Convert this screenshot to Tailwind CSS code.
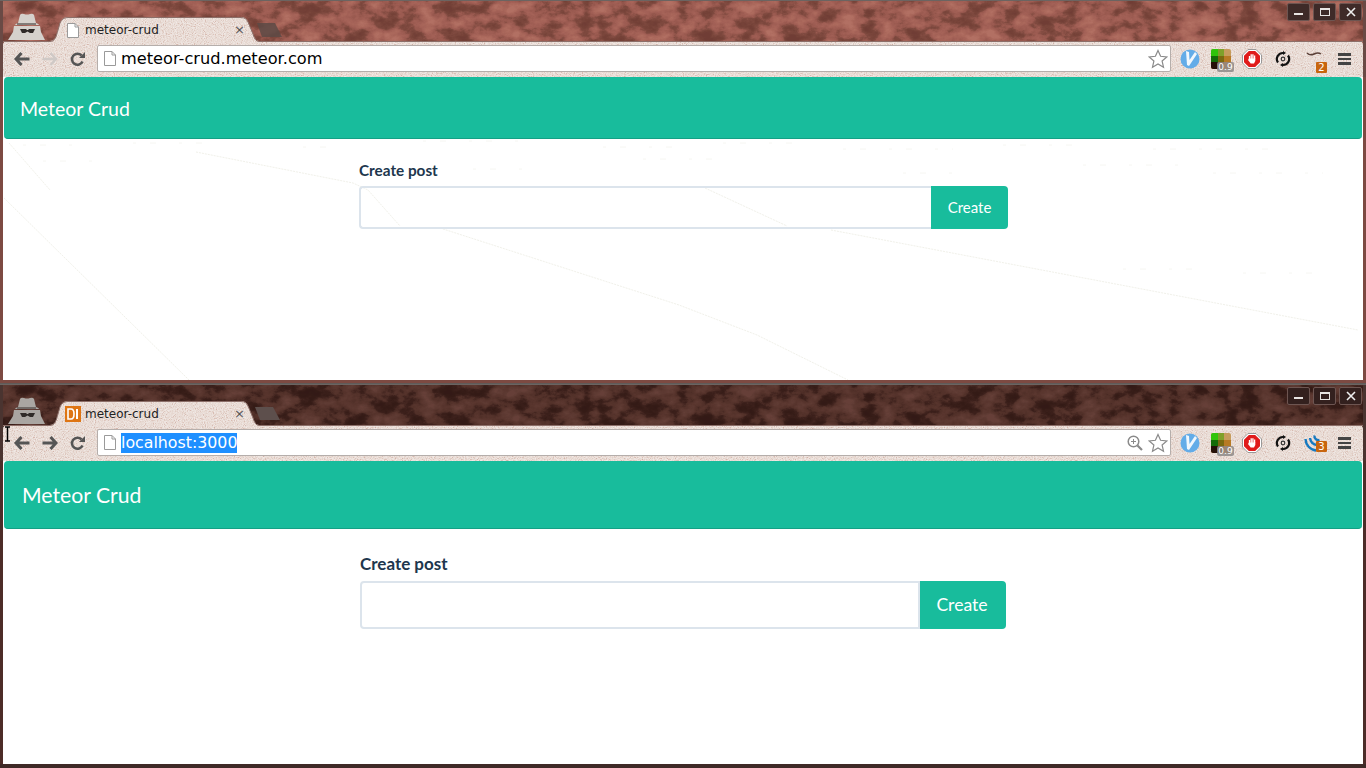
<!DOCTYPE html>
<html lang="en">
<head>
    <meta charset="UTF-8">
    <title>meteor-crud</title>
    <script src="https://cdn.jsdelivr.net/npm/@tailwindcss/browser@4"></script>
</head>
<body class="bg-[#3f2a27] overflow-hidden font-['Lato',sans-serif]">
    <div class="flex flex-col h-[768px] w-[1366px]">

        <!-- top window -->
        <section class="h-[380px] flex flex-col bg-[#7d4a42] border-t border-[#6b6461] px-[3px] relative">
            <div class="relative h-[76px] -mx-[3px]">
                <svg class="absolute inset-0" width="1366" height="76" viewBox="0 0 1366 76">
                    <defs>
                        <filter id="rustA" x="0" y="0" width="100%" height="100%" color-interpolation-filters="sRGB">
                            <feTurbulence type="fractalNoise" baseFrequency="0.05 0.07" numOctaves="7" seed="11"/>
                            <feColorMatrix values="1 0 0 0 0 1 0 0 0 0 1 0 0 0 0 0 0 0 0 1"/>
                            <feComponentTransfer>
                                <feFuncR type="table" tableValues="0.44 0.44 0.44 0.46 0.50 0.60 0.64 0.67 0.70 0.70 0.70"/>
                                <feFuncG type="table" tableValues="0.24 0.24 0.24 0.26 0.29 0.35 0.38 0.41 0.44 0.44 0.44"/>
                                <feFuncB type="table" tableValues="0.21 0.21 0.21 0.22 0.25 0.31 0.34 0.36 0.39 0.39 0.39"/>
                            </feComponentTransfer>
                        </filter>
                        <filter id="grainA" x="0" y="0" width="100%" height="100%" color-interpolation-filters="sRGB">
                            <feTurbulence type="fractalNoise" baseFrequency="0.9" numOctaves="2" seed="4"/>
                            <feColorMatrix values="1 0 0 0 0 1 0 0 0 0 1 0 0 0 0 0 0 0 0 1"/>
                            <feComponentTransfer>
                                <feFuncR type="table" tableValues="0.80 0.84 0.90 0.93 0.95 0.96"/>
                                <feFuncG type="table" tableValues="0.66 0.72 0.84 0.89 0.92 0.94"/>
                                <feFuncB type="table" tableValues="0.62 0.68 0.81 0.87 0.91 0.93"/>
                            </feComponentTransfer>
                        </filter>
                        <clipPath id="chromeA">
                            <path d="M3 76V44Q3 40 8 40H50C55 40 56 36 58 29L60 22Q62 16 68 16H241Q246 16 248 21L253 33Q255 40 259 40H1358Q1363 40 1363 44V76Z"/>
                        </clipPath>
                    </defs>
                    <rect width="1366" height="76" filter="url(#rustA)"/>
                    <rect width="3" height="76" fill="#6a4a45"/>
                    <rect x="1363" width="3" height="76" fill="#6a4a45"/>
                    <path d="M257 22H275L282 36H262Z" fill="#5d4a45" opacity="0.85"/>
                    <g clip-path="url(#chromeA)"><rect width="1366" height="76" filter="url(#grainA)"/></g>
                    <path d="M3 40.5H50C55 40.5 56 36 58 29L60 22Q62 16.500 68 16.500H241Q246 16.500 248 21L253 33Q255 40.500 259 40.500H1363" fill="none" stroke="#8c6f69" stroke-width="1"/>
                    <!-- incognito -->
                    <path d="M18 22L20 14Q21 12 24 13Q27 14 30 13Q33 12 34 14L36 22Q39 23 39 24H15Q15 23 18 22Z" fill="#d5d1cc"/>
                    <path d="M14 25H40L41 31L45 39H20H8L13 31Z" fill="#d5d1cc"/>
                    <path d="M17 23H36" stroke="#4a4340" stroke-width="1.200"/>
                    <path d="M20 28H26L27 29H28L29 28H35L33 32H30L27.500 30.500L25 32H22Z" fill="#2f2a28"/>
                </svg>
                <div class="relative flex flex-col h-full">
                    <div class="h-[40px] flex items-start">
                        <div class="ml-[67px] mt-[21px] w-[178px] flex items-center text-[12px] text-[#222] font-['DejaVu_Sans',sans-serif]">
                            <svg width="12" height="15" viewBox="0 0 12 15" class="mr-[6px] shrink-0"><path d="M.5.500H8L11.500 4V14.500H.5Z" fill="#fff" stroke="#9a9a9a"/><path d="M8 .5V4H11.500" fill="none" stroke="#9a9a9a"/></svg>
                            <span class="flex-1 leading-[16px]">meteor-crud</span>
                            <span class="text-[13px] leading-[16px] text-[#555]">×</span>
                        </div>
                        <div class="ml-auto mr-[4px] mt-[2px] flex gap-[3px]">
                            <div class="w-[23px] h-[18px] border border-[#6d5551] bg-[#3e2a28] rounded-[2px] flex items-center justify-center"><div class="w-[9px] h-[2px] mt-[3px] bg-[#e8e4e2]"></div></div>
                            <div class="w-[23px] h-[18px] border border-[#6d5551] bg-[#3e2a28] rounded-[2px] flex items-center justify-center"><div class="w-[10px] h-[8px] border border-t-2 border-[#e8e4e2]"></div></div>
                            <div class="w-[23px] h-[18px] border border-[#6d5551] bg-[#3e2a28] rounded-[2px] flex items-center justify-center"><svg width="10" height="10" viewBox="0 0 10 10"><path d="M1 1L9 9M9 1L1 9" stroke="#eee" stroke-width="1.600"/></svg></div>
                        </div>
                    </div>
                    <div class="h-[36px] flex items-center pl-[8px] pr-[6px]">
                        <div class="w-[28px] flex justify-center"><svg width="16" height="14" viewBox="0 0 16 14"><path d="M7.500 1L2 7L7.500 13M2 7H15.500" fill="none" stroke="#555" stroke-width="3"/></svg></div>
                        <div class="w-[28px] flex justify-center"><svg width="16" height="14" viewBox="0 0 16 14"><path d="M8.500 1L14 7L8.500 13M14 7H.5" fill="none" stroke="#cfc9c6" stroke-width="2.400"/></svg></div>
                        <div class="w-[28px] -ml-[1px] flex justify-center"><svg width="15" height="15" viewBox="0 0 15 15"><path d="M12.500 9.500A5.500 5.500 0 1 1 11.500 3.500" fill="none" stroke="#555" stroke-width="2.600"/><path d="M9 6H15V0Z" fill="#555"/></svg></div>
                        <div class="ml-[6px] mb-[1px] flex-1 h-[27px] bg-white border border-[#b5aeab] rounded-[2px] flex items-center pl-[6px] pr-[2px]">
                            <svg width="12" height="15" viewBox="0 0 12 15" class="mr-[5px] shrink-0"><path d="M.5.500H8L11.500 4V14.500H.5Z" fill="#fff" stroke="#9a9a9a"/><path d="M8 .5V4H11.500" fill="none" stroke="#9a9a9a"/></svg>
                            <span class="flex-1 pt-[2px] text-[16.200px] text-black font-['DejaVu_Sans',sans-serif]">meteor-crud.meteor.com</span>
                            <svg width="20" height="20" viewBox="0 0 20 20"><path d="M10 1.500L12.600 7.300L18.800 7.900L14.100 12L15.500 18.200L10 15L4.500 18.200L5.900 12L1.200 7.900L7.400 7.300Z" fill="#fff" stroke="#8a8a8a" stroke-width="1.200"/></svg>
                        </div>
                        <div class="ml-[3px] w-[31px] flex justify-center"><svg width="20" height="20" viewBox="0 0 20 20"><circle cx="10" cy="10" r="9.500" fill="#63ace8"/><path d="M6 2L9 3L9.500 11L15 3L17 5L9 17L7 16Z" fill="#fff" opacity="0.9"/></svg></div>
                        <div class="w-[31px] flex justify-center relative">
                            <svg width="20" height="20" viewBox="0 0 20 20"><rect width="20" height="20" rx="2" fill="#c69c5d"/><path d="M0 2Q0 0 2 0H7V7H0Z" fill="#2fc40a"/><rect x="7" width="6" height="7" fill="#7fa02a"/><rect y="7" width="7" height="6" fill="#136b08"/><rect x="7" y="7" width="6" height="6" fill="#7a6a10"/><rect x="13" y="7" width="7" height="6" fill="#b77a24"/><path d="M0 13H7V20H2Q0 20 0 18Z" fill="#241008"/><rect x="7" y="13" width="6" height="7" fill="#7a3f0a"/><path d="M13 13H20V18Q20 20 18 20H13Z" fill="#dc7410"/></svg>
                            <span class="absolute left-[12px] top-[13px] w-[17px] h-[10px] bg-[#8d8a88]/85 rounded-[2px] text-[9px] leading-[10px] text-white text-center font-['DejaVu_Sans',sans-serif]">0.9</span>
                        </div>
                        <div class="w-[31px] flex justify-center"><svg width="20" height="20" viewBox="0 0 20 20"><path d="M6 .5H14L19.500 6V14L14 19.500H6L.5 14V6Z" fill="#fff" stroke="#999"/><path d="M6.800 2L13.200 2L18 6.800V13.200L13.200 18H6.800L2 13.200V6.800Z" fill="#e01b1b"/><path d="M7.500 10V7M9.200 10V5.200M10.900 10V5.200M12.600 10V6.500" stroke="#fff" stroke-width="1.300"/><path d="M6.900 9.500H13.300V12L12 14.500H8.700L6 11Z" fill="#fff"/></svg></div>
                        <div class="w-[31px] flex justify-center"><svg width="16" height="16" viewBox="0 0 16 16"><path d="M3 11.500A6 6 0 0 1 8 2M13 4.500A6 6 0 0 1 8 14" fill="none" stroke="#111" stroke-width="2.200"/><circle cx="8" cy="8" r="1.800" fill="none" stroke="#333" stroke-width="1.200"/><path d="M8 0L11 2L8 4ZM8 16L5 14L8 12Z" fill="#111"/></svg></div>
                        <div class="w-[31px] flex justify-center relative">
                            <svg width="16" height="6" viewBox="0 0 16 6" class="-mt-[8px]"><path d="M1 2Q4 5 8 3Q12 1 15 3" fill="none" stroke="#5b4038" stroke-width="1.500"/></svg>
                            <span class="absolute left-[18px] top-[3px] w-[11px] h-[11px] bg-[#c8650e] rounded-[1px] text-[10px] leading-[11px] text-white text-center font-['DejaVu_Sans',sans-serif]">2</span>
                        </div>
                        <div class="w-[31px] flex justify-center"><div class="w-[13px] flex flex-col gap-[2px]"><div class="h-[2.500px] bg-[#444]"></div><div class="h-[2.500px] bg-[#444]"></div><div class="h-[2.500px] bg-[#444]"></div></div></div>
                    </div>
                </div>
            </div>
            <div class="flex-1 bg-white relative">
                <!-- faint leftovers of the wallpaper on the page -->
                <svg class="absolute inset-0" width="1360" height="303" viewBox="0 0 1360 303">
                    <path d="M6 66L47 113M1 121L186 303M193 75L350 106L365 113L397 149M437 151L676 228L754 258L845 303M702 111L784 149M828 153L1355 253" fill="none" stroke="#f1f1ea" stroke-width="1" stroke-dasharray="2 1"/>
                    <path d="M20 68H70M130 66H220M300 70H345M420 64H520M600 70H680M720 66H800M840 72H950M1000 68H1090M1150 72H1280M40 84H90M470 92H520M640 82H720M900 96H960M1080 88H1180M1210 96H1320M1120 192H1200M1240 196H1330" fill="none" stroke="#f6f6f2" stroke-width="1" stroke-dasharray="3 14 6 23"/>
                </svg>
                <nav class="relative mx-px h-[62px] bg-[#18bc9c] border-b border-[#14a085] rounded-[4px] flex items-center pl-[16px]">
                    <span class="text-[19.500px] pt-[2px] text-white">Meteor Crud</span>
                </nav>
                <div class="relative ml-[356px] w-[649px] pt-[22px]">
                    <label class="block text-[15.300px] leading-[18px] font-bold text-[#20364d]">Create post</label>
                    <div class="mt-[7px] flex h-[43px]">
                        <input type="text" class="flex-1 min-w-0 bg-transparent border-2 border-r-0 border-[#dce4ec] rounded-l-[4px]">
                        <button class="w-[77px] bg-[#18bc9c] text-white text-[15px] rounded-r-[4px]">Create</button>
                    </div>
                </div>
            </div>
        </section>

        <div class="h-[3px] bg-[#7d4a42]"></div>
        <div class="h-px bg-[#5f5a58]"></div>

        <!-- bottom window -->
        <section class="h-[380px] flex flex-col bg-[#4d2c28] border-t border-[#6b6461] px-[3px]">
            <div class="relative h-[76px] -mx-[3px]">
                <svg class="absolute inset-0" width="1366" height="76" viewBox="0 0 1366 76">
                    <defs>
                        <filter id="rustB" x="0" y="0" width="100%" height="100%" color-interpolation-filters="sRGB">
                            <feTurbulence type="fractalNoise" baseFrequency="0.05 0.07" numOctaves="7" seed="11"/>
                            <feColorMatrix values="1 0 0 0 0 1 0 0 0 0 1 0 0 0 0 0 0 0 0 1"/>
                            <feComponentTransfer>
                                <feFuncR type="table" tableValues="0.20 0.20 0.20 0.21 0.24 0.32 0.35 0.37 0.40 0.40 0.40"/>
                                <feFuncG type="table" tableValues="0.10 0.10 0.10 0.11 0.13 0.19 0.21 0.23 0.25 0.25 0.25"/>
                                <feFuncB type="table" tableValues="0.09 0.09 0.09 0.09 0.11 0.16 0.18 0.20 0.22 0.22 0.22"/>
                            </feComponentTransfer>
                        </filter>
                        <filter id="grainB" x="0" y="0" width="100%" height="100%" color-interpolation-filters="sRGB">
                            <feTurbulence type="fractalNoise" baseFrequency="0.9" numOctaves="2" seed="9"/>
                            <feColorMatrix values="1 0 0 0 0 1 0 0 0 0 1 0 0 0 0 0 0 0 0 1"/>
                            <feComponentTransfer>
                                <feFuncR type="table" tableValues="0.80 0.84 0.90 0.93 0.95 0.96"/>
                                <feFuncG type="table" tableValues="0.66 0.72 0.84 0.89 0.92 0.94"/>
                                <feFuncB type="table" tableValues="0.62 0.68 0.81 0.87 0.91 0.93"/>
                            </feComponentTransfer>
                        </filter>
                        <clipPath id="chromeB">
                            <path d="M3 76V44Q3 40 8 40H50C55 40 56 36 58 29L60 22Q62 16 68 16H241Q246 16 248 21L253 33Q255 40 259 40H1358Q1363 40 1363 44V76Z"/>
                        </clipPath>
                    </defs>
                    <rect width="1366" height="76" filter="url(#rustB)"/>
                    <rect width="3" height="76" fill="#4a3430"/>
                    <rect x="1363" width="3" height="76" fill="#4a3430"/>
                    <path d="M255 22H273L280 35H260Z" fill="#5d4f4c"/>
                    <g clip-path="url(#chromeB)"><rect width="1366" height="76" filter="url(#grainB)"/></g>
                    <path d="M3 40.5H50C55 40.5 56 36 58 29L60 22Q62 16.500 68 16.500H241Q246 16.500 248 21L253 33Q255 40.500 259 40.500H1363" fill="none" stroke="#8c6f69" stroke-width="1"/>
                    <path d="M18 22L20 14Q21 12 24 13Q27 14 30 13Q33 12 34 14L36 22Q39 23 39 24H15Q15 23 18 22Z" fill="#aaa6a2"/>
                    <path d="M14 25H40L41 31L45 39H20H8L13 31Z" fill="#aaa6a2"/>
                    <path d="M17 23H36" stroke="#4a4340" stroke-width="1.200"/>
                    <path d="M20 28H26L27 29H28L29 28H35L33 32H30L27.500 30.500L25 32H22Z" fill="#2f2a28"/>
                </svg>
                <div class="relative flex flex-col h-full">
                    <div class="h-[40px] flex items-start">
                        <div class="ml-[65px] mt-[21px] w-[180px] flex items-center text-[12px] text-[#222] font-['DejaVu_Sans',sans-serif]">
                            <svg width="16" height="16" viewBox="0 0 16 16" class="mr-[4px] shrink-0"><rect width="16" height="16" fill="#de7514"/><path d="M3 3H6Q9 3 9 8Q9 13 6 13H3Z" fill="none" stroke="#fff" stroke-width="1.600"/><rect x="11" y="3" width="2" height="10" fill="#fff"/></svg>
                            <span class="flex-1 leading-[16px]">meteor-crud</span>
                            <span class="text-[13px] leading-[16px] text-[#555]">×</span>
                        </div>
                        <div class="ml-auto mr-[4px] mt-[2px] flex gap-[3px]">
                            <div class="w-[23px] h-[18px] border border-[#6d5551] bg-[#33201e] rounded-[2px] flex items-center justify-center"><div class="w-[9px] h-[2px] mt-[3px] bg-[#e8e4e2]"></div></div>
                            <div class="w-[23px] h-[18px] border border-[#6d5551] bg-[#33201e] rounded-[2px] flex items-center justify-center"><div class="w-[10px] h-[8px] border border-t-2 border-[#e8e4e2]"></div></div>
                            <div class="w-[23px] h-[18px] border border-[#6d5551] bg-[#33201e] rounded-[2px] flex items-center justify-center"><svg width="10" height="10" viewBox="0 0 10 10"><path d="M1 1L9 9M9 1L1 9" stroke="#eee" stroke-width="1.600"/></svg></div>
                        </div>
                    </div>
                    <div class="h-[36px] flex items-center pl-[8px] pr-[6px]">
                        <div class="w-[28px] flex justify-center"><svg width="16" height="14" viewBox="0 0 16 14"><path d="M7.500 1L2 7L7.500 13M2 7H15.500" fill="none" stroke="#555" stroke-width="3"/></svg></div>
                        <div class="w-[28px] flex justify-center"><svg width="16" height="14" viewBox="0 0 16 14"><path d="M8.500 1L14 7L8.500 13M14 7H.5" fill="none" stroke="#555" stroke-width="3"/></svg></div>
                        <div class="w-[28px] -ml-[1px] flex justify-center"><svg width="15" height="15" viewBox="0 0 15 15"><path d="M12.500 9.500A5.500 5.500 0 1 1 11.500 3.500" fill="none" stroke="#555" stroke-width="2.600"/><path d="M9 6H15V0Z" fill="#555"/></svg></div>
                        <div class="ml-[6px] mb-[1px] flex-1 h-[27px] bg-white border border-[#b5aeab] rounded-[2px] flex items-center pl-[6px] pr-[2px]">
                            <svg width="12" height="15" viewBox="0 0 12 15" class="mr-[5px] shrink-0"><path d="M.5.500H8L11.500 4V14.500H.5Z" fill="#fff" stroke="#9a9a9a"/><path d="M8 .5V4H11.500" fill="none" stroke="#9a9a9a"/></svg>
                            <span class="text-[15.800px] leading-[20px] text-white bg-[#1e8fff] font-['DejaVu_Sans',sans-serif]">localhost:3000</span>
                            <svg width="16" height="16" viewBox="0 0 16 16" class="ml-auto mr-[5px]"><circle cx="6.500" cy="6.500" r="5.300" fill="none" stroke="#8a8a8a" stroke-width="1.500"/><path d="M10.500 10.500L15 15" stroke="#8a8a8a" stroke-width="2.200"/><path d="M4 6.500H9M6.500 4V9" stroke="#8a8a8a"/></svg>
                            <svg width="20" height="20" viewBox="0 0 20 20"><path d="M10 1.500L12.600 7.300L18.800 7.900L14.100 12L15.500 18.200L10 15L4.500 18.200L5.900 12L1.200 7.900L7.400 7.300Z" fill="#fff" stroke="#8a8a8a" stroke-width="1.200"/></svg>
                        </div>
                        <div class="ml-[3px] w-[31px] flex justify-center"><svg width="20" height="20" viewBox="0 0 20 20"><circle cx="10" cy="10" r="9.500" fill="#63ace8"/><path d="M6 2L9 3L9.500 11L15 3L17 5L9 17L7 16Z" fill="#fff" opacity="0.9"/></svg></div>
                        <div class="w-[31px] flex justify-center relative">
                            <svg width="20" height="20" viewBox="0 0 20 20"><rect width="20" height="20" rx="2" fill="#c69c5d"/><path d="M0 2Q0 0 2 0H7V7H0Z" fill="#2fc40a"/><rect x="7" width="6" height="7" fill="#7fa02a"/><rect y="7" width="7" height="6" fill="#136b08"/><rect x="7" y="7" width="6" height="6" fill="#7a6a10"/><rect x="13" y="7" width="7" height="6" fill="#b77a24"/><path d="M0 13H7V20H2Q0 20 0 18Z" fill="#241008"/><rect x="7" y="13" width="6" height="7" fill="#7a3f0a"/><path d="M13 13H20V18Q20 20 18 20H13Z" fill="#dc7410"/></svg>
                            <span class="absolute left-[12px] top-[13px] w-[17px] h-[10px] bg-[#8d8a88]/85 rounded-[2px] text-[9px] leading-[10px] text-white text-center font-['DejaVu_Sans',sans-serif]">0.9</span>
                        </div>
                        <div class="w-[31px] flex justify-center"><svg width="20" height="20" viewBox="0 0 20 20"><path d="M6 .5H14L19.500 6V14L14 19.500H6L.5 14V6Z" fill="#fff" stroke="#999"/><path d="M6.800 2L13.200 2L18 6.800V13.200L13.200 18H6.800L2 13.200V6.800Z" fill="#e01b1b"/><path d="M7.500 10V7M9.200 10V5.200M10.900 10V5.200M12.600 10V6.500" stroke="#fff" stroke-width="1.300"/><path d="M6.900 9.500H13.300V12L12 14.500H8.700L6 11Z" fill="#fff"/></svg></div>
                        <div class="w-[31px] flex justify-center"><svg width="16" height="16" viewBox="0 0 16 16"><path d="M3 11.500A6 6 0 0 1 8 2M13 4.500A6 6 0 0 1 8 14" fill="none" stroke="#111" stroke-width="2.200"/><circle cx="8" cy="8" r="1.800" fill="none" stroke="#333" stroke-width="1.200"/><path d="M8 0L11 2L8 4ZM8 16L5 14L8 12Z" fill="#111"/></svg></div>
                        <div class="w-[31px] flex justify-center relative">
                            <svg width="19" height="18" viewBox="0 0 19 18"><path d="M1.500 5A12 12 0 0 0 12 16.500M6 4A7.500 7.500 0 0 0 13 11M10.500 1.500A4 4 0 0 0 15.500 6" fill="none" stroke="#1679c0" stroke-width="2.400"/></svg>
                            <span class="absolute left-[18px] top-[7px] w-[11px] h-[11px] bg-[#c8650e] rounded-[1px] text-[10px] leading-[11px] text-white text-center font-['DejaVu_Sans',sans-serif]">3</span>
                        </div>
                        <div class="w-[31px] flex justify-center"><div class="w-[13px] flex flex-col gap-[2px]"><div class="h-[2.500px] bg-[#444]"></div><div class="h-[2.500px] bg-[#444]"></div><div class="h-[2.500px] bg-[#444]"></div></div></div>
                    </div>
                </div>
            </div>
            <div class="flex-1 bg-white">
                <nav class="mx-px h-[68px] bg-[#18bc9c] border-b border-[#14a085] rounded-[4px] flex items-center pl-[18px]">
                    <span class="text-[21.200px] pt-[2px] text-white">Meteor Crud</span>
                </nav>
                <div class="ml-[357px] w-[646px] pt-[25px]">
                    <label class="block text-[17px] leading-[20px] font-bold text-[#20364d]">Create post</label>
                    <div class="mt-[7px] flex h-[48px]">
                        <input type="text" class="flex-1 min-w-0 bg-white border-2 border-[#dce4ec] rounded-l-[4px]">
                        <button class="w-[86px] bg-[#18bc9c] text-white text-[17.600px] pr-[2px] rounded-r-[4px]">Create</button>
                    </div>
                </div>
            </div>
        </section>

        <div class="flex-1 bg-[#3f2a27]"></div>
    </div>
    <!-- text cursor over the bottom toolbar -->
    <svg class="absolute left-[4px] top-[426px]" width="7" height="16" viewBox="0 0 7 16"><path d="M1 1H6M3.500 1V15M1 15H6" fill="none" stroke="#000" stroke-width="1.500"/></svg>
</body>
</html>
